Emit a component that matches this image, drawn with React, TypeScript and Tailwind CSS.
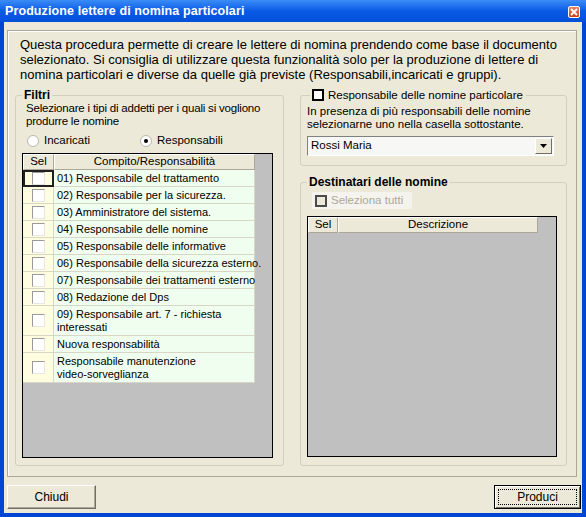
import React from "react";

const font = { fontFamily: '"Liberation Sans", Arial, sans-serif' };

const rows: { label: string[]; tall?: boolean }[] = [
  { label: ["01) Responsabile del trattamento"] },
  { label: ["02) Responsabile per la sicurezza."] },
  { label: ["03) Amministratore del sistema."] },
  { label: ["04) Responsabile delle nomine"] },
  { label: ["05) Responsabile delle informative"] },
  { label: ["06) Responsabile della sicurezza esterno."] },
  { label: ["07) Responsabile dei trattamenti esterno"] },
  { label: ["08) Redazione del Dps"] },
  { label: ["09) Responsabile art. 7 - richiesta", "interessati"], tall: true },
  { label: ["Nuova responsabilità"] },
  { label: ["Responsabile manutenzione", "video-sorveglianza"], tall: true },
];

function GridCheck() {
  return (
    <span className="block w-[13px] h-[13px] bg-white border border-t-[#9a9a9a] border-l-[#9a9a9a] border-r-[#e6e6e6] border-b-[#e6e6e6]" />
  );
}

function HeaderCell({ w, children }: { w: string; children: React.ReactNode }) {
  return (
    <div
      className={`${w} shrink-0 h-full flex items-center justify-center bg-[#ece9d8] border-t border-l border-white border-r border-b border-r-[#aca899] border-b-[#aca899] text-[11.5px] leading-none`}
    >
      {children}
    </div>
  );
}

function Radio({ checked }: { checked?: boolean }) {
  return (
    <span className="w-[12px] h-[12px] rounded-full bg-white border border-[#b9b8b0] flex items-center justify-center">
      {checked && <span className="w-[4px] h-[4px] rounded-full bg-black" />}
    </span>
  );
}

export default function App() {
  return (
    <div style={font} className="w-[586px] h-[517px] flex flex-col text-black bg-[#0046d5]">
      {/* title bar */}
      <div className="h-[22px] flex items-center justify-between pl-[5px] pr-[6px] bg-gradient-to-b from-[#3a8cf6] via-[#0a5ae6] to-[#0450d8]">
        <span className="text-white font-bold text-[12.5px] tracking-[0.1px]">Produzione lettere di nomina particolari</span>
        <span className="w-[12px] h-[12px] mt-[1px] rounded-[2px] border border-white bg-gradient-to-b from-[#e8845f] to-[#c9401c] flex items-center justify-center">
          <svg width="8" height="8" viewBox="0 0 8 8">
            <path d="M1 1 L7 7 M7 1 L1 7" stroke="white" strokeWidth="1.8" />
          </svg>
        </span>
      </div>

      {/* body */}
      <div className="flex-1 mx-[4px] mb-[4px] bg-[#ece9d8] pt-[8px] pl-[3px] flex flex-col">
        <div className="w-[570px] h-[447px] border border-[#aca899] shadow-[inset_1px_1px_0_#ffffff] flex flex-col">
          <p className="ml-[12px] mt-[6px] w-[545px] text-[13px] leading-[15px]">
            Questa procedura permette di creare le lettere di nomina prendendo come base il documento
            selezionato. Si consiglia di utilizzare questa funzionalità solo per la produzione di lettere di
            nomina particolari e diverse da quelle già previste (Responsabili,incaricati e gruppi).
          </p>

          <div className="flex ml-[7px] mt-[13px] gap-[16px]">
            {/* Filtri */}
            <div className="relative w-[269px] h-[371px] border border-[#d0d0bf] rounded-[3px] pl-[6px]">
              <span className="absolute -top-[8px] left-[6px] px-[2px] bg-[#ece9d8] font-bold text-[12px] leading-[14px]">
                Filtri
              </span>
              <p className="ml-[4px] mt-[6px] text-[11.5px] leading-[13px] whitespace-nowrap tracking-[-0.2px]">
                Selezionare i tipi di addetti per i quali si vogliono
                <br />
                produrre le nomine
              </p>
              <div className="flex items-center mt-[6px] ml-[5px] text-[11.5px] leading-none h-[14px]">
                <Radio />
                <span className="ml-[5px] w-[96px]">Incaricati</span>
                <Radio checked />
                <span className="ml-[5px]">Responsabili</span>
              </div>

              <div className="mt-[5px] w-[251px] h-[305px] border border-black bg-[#c0c0c0] flex flex-col">
                <div className="h-[16px] shrink-0 flex">
                  <HeaderCell w="w-[31px]">Sel</HeaderCell>
                  <HeaderCell w="w-[201px]">Compito/Responsabilità</HeaderCell>
                </div>
                {rows.map((r, i) => (
                  <div key={i} className={`${r.tall ? "h-[30px]" : "h-[17px]"} shrink-0 flex`}>
                    <div
                      className={`w-[31px] shrink-0 h-full bg-[#fffde0] border-b border-r border-[#d8d6c4] flex items-center justify-center ${
                        i === 0 ? "outline-2 outline-[#202020] -outline-offset-2" : ""
                      }`}
                    >
                      <GridCheck />
                    </div>
                    <div className="w-[201px] shrink-0 h-full bg-[#f0fef0] border-b border-r border-[#d8d6c4] flex flex-col justify-center pl-[3px] text-[11px] leading-[13px] whitespace-nowrap">
                      {r.label.map((l, j) => (
                        <span key={j}>{l}</span>
                      ))}
                    </div>
                  </div>
                ))}
              </div>
            </div>

            {/* right column */}
            <div className="w-[267px] flex flex-col">
              <div className="relative h-[71px] border border-[#d0d0bf] rounded-[3px] pl-[6px]">
                <span className="absolute -top-[8px] left-[9px] pl-[2px] pr-[3px] bg-[#ece9d8] flex items-center text-[11.5px] leading-[14px]">
                  <span className="w-[12px] h-[12px] border-2 border-black bg-white mr-[4px]" />
                  Responsabile delle nomine particolare
                </span>
                <p className="mt-[9px] text-[11.5px] leading-[13px]">
                  In presenza di più responsabili delle nomine
                  <br />
                  selezionarne uno nella casella sottostante.
                </p>
                <div className="mt-[5px] w-[247px] h-[20px] border border-t-[#808080] border-l-[#808080] border-r-white border-b-white bg-[#f7f7f5] flex items-center">
                  <span className="flex-1 pl-[3px] text-[11.5px] leading-none">Rossi Maria</span>
                  <span className="w-[17px] h-[16px] mr-[1px] bg-[#ece9d8] border border-t-white border-l-white border-r-[#716f64] border-b-[#716f64] flex items-center justify-center">
                    <svg width="7" height="4" viewBox="0 0 7 4">
                      <path d="M0 0 H7 L3.5 4 Z" fill="black" />
                    </svg>
                  </span>
                </div>
              </div>

              <div className="relative mt-[16px] h-[284px] border border-[#d0d0bf] rounded-[3px] pl-[6px]">
                <span className="absolute -top-[8px] left-[6px] px-[2px] bg-[#ece9d8] font-bold text-[12px] leading-[14px]">
                  Destinatari delle nomine
                </span>
                <div className="mt-[9px] ml-[5px] w-[100px] h-[17px] bg-[#f4f3ee] flex items-center pl-[3px] text-[11.5px] text-[#aca899] leading-none">
                  <span className="w-[12px] h-[12px] border-2 border-[#4a4a4a] bg-[#ece9d8] mr-[4px]" />
                  Seleziona tutti
                </div>
                <div className="mt-[7px] w-[250px] h-[241px] border border-black bg-[#c0c0c0] flex flex-col">
                  <div className="h-[16px] flex">
                    <HeaderCell w="w-[30px]">Sel</HeaderCell>
                    <HeaderCell w="w-[200px]">Descrizione</HeaderCell>
                  </div>
                </div>
              </div>
            </div>
          </div>
        </div>

        {/* buttons */}
        <div className="flex justify-between mt-[8px] w-[574px]">
          <button className="w-[89px] h-[24px] bg-[#ece9d8] border border-t-white border-l-white border-r-[#716f64] border-b-[#716f64] shadow-[inset_-1px_-1px_0_#aca899] text-[12px]">
            Chiudi
          </button>
          <button className="w-[87px] h-[24px] bg-[#ece9d8] border border-black p-[3px] shadow-[inset_1px_1px_0_#ffffff,inset_-1px_-1px_0_#716f64] text-[12px]">
            <span className="w-full h-full flex items-center justify-center border border-dotted border-black">
              Produci
            </span>
          </button>
        </div>
      </div>
    </div>
  );
}
